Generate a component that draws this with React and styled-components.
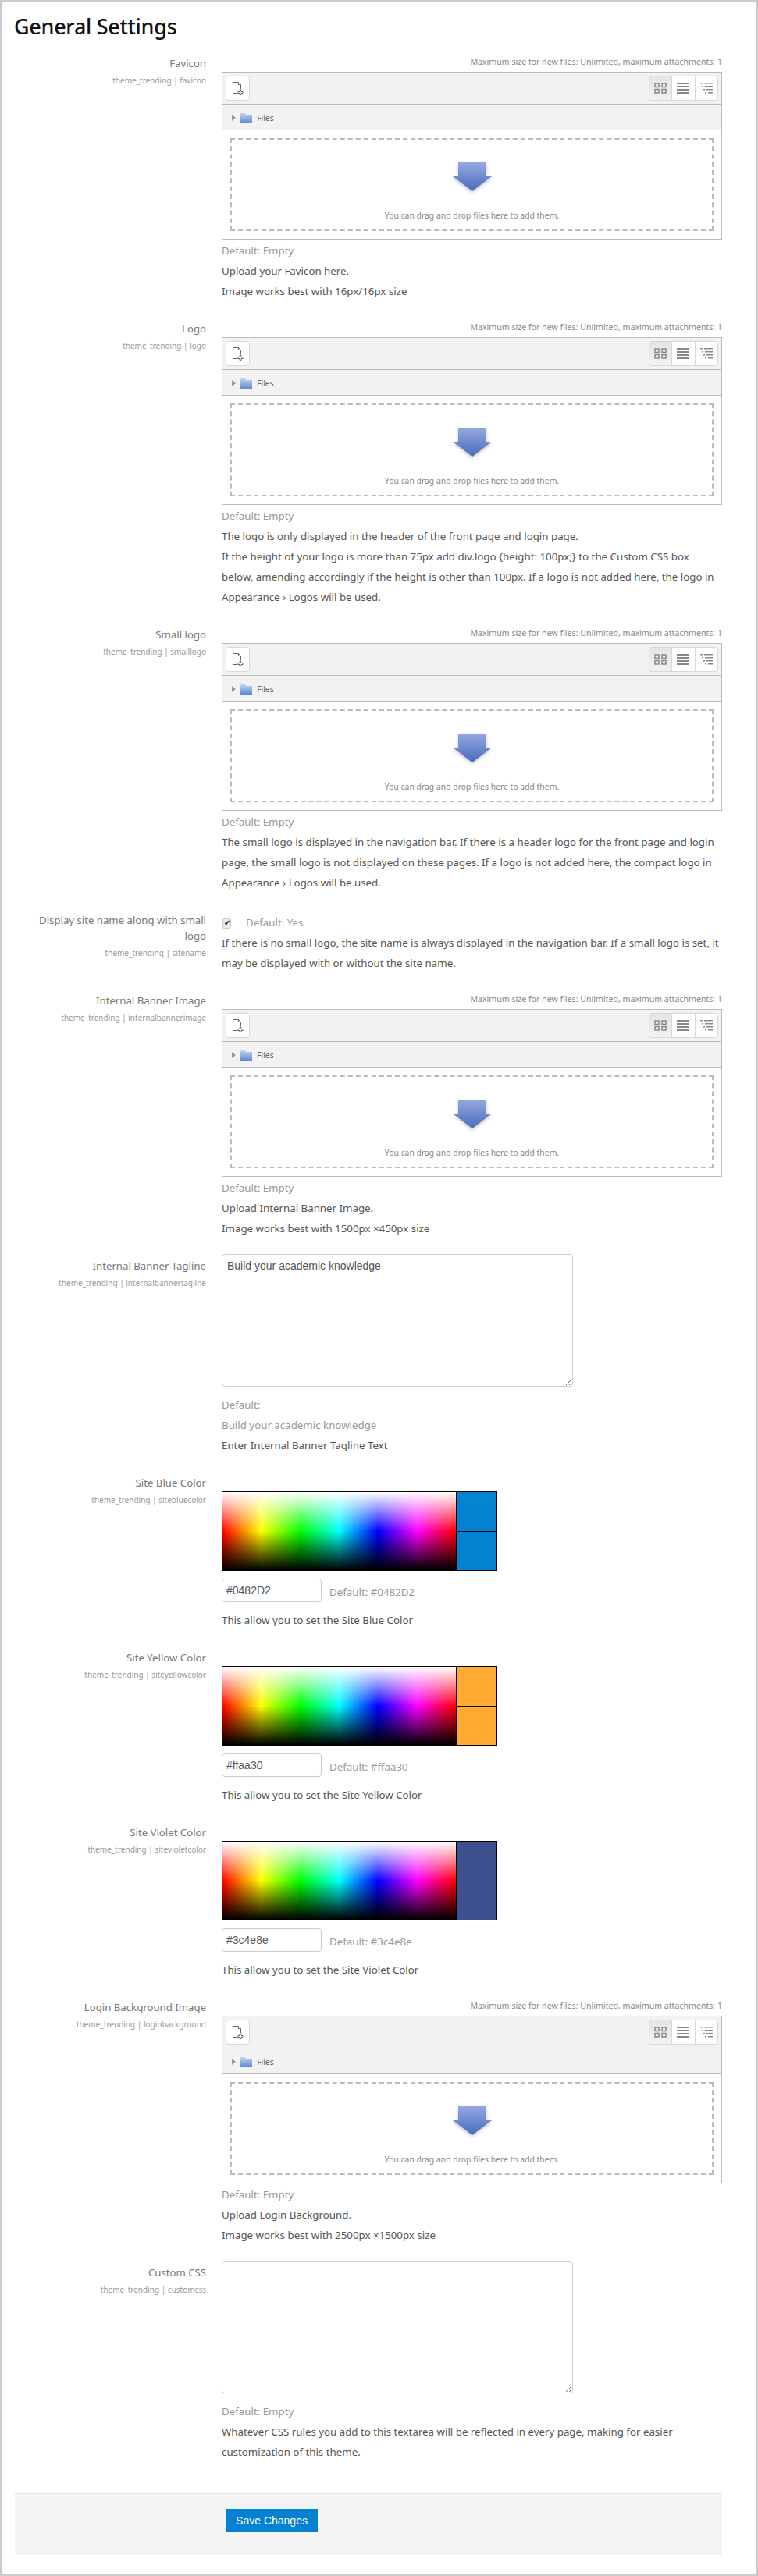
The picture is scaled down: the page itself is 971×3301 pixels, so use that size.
import styled, { createGlobalStyle } from 'styled-components';

const GlobalStyle = createGlobalStyle`
  body {
    margin: 0;
    background: #fff;
    color: #555;
    font-family: 'Noto Sans', 'Open Sans', sans-serif;
    font-size: 13.3px;
    line-height: 26px;
  }
`;

const Page = styled.div`
  box-sizing: border-box;
  width: 971px;
  height: 3301px;
  border: 2px solid #ccc;
  padding: 0 44px 0 17px;
`;

const Heading = styled.h2`
  margin: 0 0 0 -1px;
  height: 64px;
  padding-top: 12px;
  box-sizing: border-box;
  color: #111;
  font-size: 27px;
  font-weight: 500;
  letter-spacing: -0.3px;
  line-height: 40px;
`;

const Row = styled.div`
  display: grid;
  grid-template-columns: 245px 641px;
  column-gap: 20px;
  margin-bottom: 20px;
`;

const LabelCol = styled.div`
  padding: 5px 0 0 15px;
  text-align: right;
`;

const Title = styled.div`
  color: #777;
  font-size: 13.2px;
  line-height: 20px;
`;

const Shortname = styled.div`
  margin-top: 2px;
  color: #999;
  font-size: 10px;
  line-height: 20px;
`;

const Limits = styled.div`
  color: #888;
  font-size: 10.6px;
  line-height: 26px;
  text-align: right;
`;

const Picker = styled.div`
  box-sizing: border-box;
  height: 215px;
  border: 1px solid #bbb;
  margin-bottom: 1px;
`;

const Toolbar = styled.div`
  display: flex;
  justify-content: space-between;
  align-items: flex-start;
  box-sizing: border-box;
  height: 41px;
  padding: 4px 4px 0;
  background: #f2f2f2;
  border-bottom: 1px solid #bbb;
`;

const ToolButton = styled.div`
  display: flex;
  align-items: center;
  justify-content: center;
  box-sizing: border-box;
  width: ${({ $wide }) => ($wide ? '31px' : '30.5px')};
  height: 32px;
  background: ${({ $active }) => ($active ? 'linear-gradient(#e4e4e4, #f2f2f2)' : '#fff')};
  border: 1px solid #d8d8d8;
  border-radius: 4px;
`;

const ViewGroup = styled.div`
  display: flex;
  ${ToolButton} {
    border-radius: 0;
    margin-left: -1px;
  }
  ${ToolButton}:first-child {
    border-radius: 4px 0 0 4px;
  }
  ${ToolButton}:last-child {
    border-radius: 0 4px 4px 0;
  }
`;

const PathBar = styled.div`
  display: flex;
  align-items: center;
  box-sizing: border-box;
  height: 33px;
  padding: 1px 0 0 12px;
  gap: 6px;
  background: #f2f2f2;
  border-bottom: 1px solid #bbb;
  color: #666;
  font-size: 10.5px;
`;

const Caret = styled.span`
  width: 0;
  height: 0;
  border-left: 5px solid #999;
  border-top: 4px solid transparent;
  border-bottom: 4px solid transparent;
`;

const DropArea = styled.div`
  box-sizing: border-box;
  height: 139px;
  padding: 10px;
`;

const DropZone = styled.div`
  display: flex;
  flex-direction: column;
  align-items: center;
  box-sizing: border-box;
  height: 119px;
  padding-top: 29px;
  border: 2px dashed #bbb;
  color: #888;
  font-size: 10.4px;
  line-height: 20px;
`;

const DropText = styled.div`
  margin-top: 20px;
`;

const ArrowSvg = styled.svg`
  display: block;
  filter: drop-shadow(0 2px 2px rgba(0, 0, 0, 0.22));
`;

const Muted = styled.div`
  color: #999;
`;

const Text = styled.div`
  color: #555;
`;

const CheckRow = styled.div`
  display: flex;
  align-items: center;
  gap: 19px;
  margin-top: 5px;
`;

const CheckBox = styled.input`
  appearance: none;
  display: flex;
  align-items: center;
  justify-content: center;
  width: 11px;
  height: 13px;
  margin: 2px 0 0 1px;
  background: #e9e9e9;
  border: 1px solid #ccc;
  border-radius: 2px;

  &::after {
    content: '✔';
    color: #111;
    font-size: 10px;
    line-height: 1;
  }
`;

const Area = styled.textarea`
  display: block;
  box-sizing: border-box;
  width: 450px;
  height: 170px;
  margin: 0 0 10px;
  padding: 4px 6px;
  border: 1px solid #ccc;
  border-radius: 4px;
  color: #555;
  font-family: 'Liberation Sans', Arial, sans-serif;
  font-size: 14px;
  line-height: 20px;
`;

const ColorWrap = styled.div`
  padding-top: 26px;
`;

const ColorBox = styled.div`
  display: grid;
  grid-template-columns: 1fr 52px;
  box-sizing: border-box;
  width: 353px;
  height: 102px;
  border: 1px solid #000;
`;

const Spectrum = styled.div`
  background:
    linear-gradient(#fff 0%, rgba(255, 255, 255, 0) 50%, rgba(0, 0, 0, 0) 50%, #000 100%),
    linear-gradient(90deg, #f00 0%, #ff0 16.6%, #0f0 33.3%, #0ff 50%, #00f 66.6%, #f0f 83.3%, #f00 100%);
`;

const Swatches = styled.div`
  display: grid;
  grid-template-rows: 1fr 1fr;
  border-left: 1px solid #000;
`;

const Swatch = styled.div`
  background: ${({ $color }) => $color};
  & + & {
    border-top: 1px solid #000;
  }
`;

const ColorMeta = styled.div`
  display: flex;
  align-items: center;
  gap: 10px;
  margin: 10px 0;
`;

const ColorInput = styled.input`
  box-sizing: border-box;
  width: 128px;
  height: 30px;
  padding: 0 5px;
  border: 1px solid #ccc;
  border-radius: 4px;
  color: #555;
  font-family: 'Liberation Sans', Arial, sans-serif;
  font-size: 14px;
`;

const ColorDefault = styled(Muted)`
  margin-top: 3px;
`;

const Footer = styled.div`
  box-sizing: border-box;
  height: 79px;
  margin-top: 40px;
  width: 906px;
  padding: 19px 0 0 270px;
  background: #f4f4f4;
  border-top: 1px solid #e6e6e6;
`;

const SaveButton = styled.button`
  width: 118px;
  height: 30px;
  padding: 0;
  background: #0482d2;
  border: 0;
  color: #fff;
  font-family: 'Liberation Sans', Arial, sans-serif;
  font-size: 14px;
`;

const AddFileIcon = () => (
  <svg width="18" height="18" viewBox="0 0 18 18" fill="none" stroke="#666" strokeWidth="1">
    <path d="M2.5 15.5V1.5h7l3 3v6" />
    <path d="M9.5 1.5v3h3" />
    <path d="M2.5 15.5h6" />
    <path d="M11 11.5h2v2h2v2h-2v2h-2v-2H9v-2h2z" fill="#fff" />
  </svg>
);

const GridIcon = () => (
  <svg width="16" height="14" viewBox="0 0 16 14" fill="none" stroke="#888" strokeWidth="1.5">
    <rect x="1" y="1" width="5" height="4.5" />
    <rect x="10" y="1" width="5" height="4.5" />
    <rect x="1" y="8.5" width="5" height="4.5" />
    <rect x="10" y="8.5" width="5" height="4.5" />
  </svg>
);

const ListIcon = () => (
  <svg width="16" height="14" viewBox="0 0 16 14" fill="#888">
    <rect y="0" width="16" height="2" />
    <rect y="4" width="16" height="2" />
    <rect y="8" width="16" height="2" />
    <rect y="12" width="16" height="2" />
  </svg>
);

const TreeIcon = () => (
  <svg width="16" height="14" viewBox="0 0 16 14" fill="#888">
    <rect x="0" y="0" width="3" height="1.5" />
    <rect x="5" y="0" width="11" height="1.5" />
    <rect x="2" y="4" width="2" height="1.5" />
    <rect x="6" y="4" width="10" height="1.5" />
    <rect x="4" y="8" width="2" height="1.5" />
    <rect x="8" y="8" width="8" height="1.5" />
    <rect x="6" y="12" width="2" height="1.5" />
    <rect x="10" y="12" width="6" height="1.5" />
  </svg>
);

const FolderIcon = () => (
  <svg width="15" height="14" viewBox="0 0 15 14">
    <defs>
      <linearGradient id="folderFill" x1="0" y1="0" x2="0" y2="1">
        <stop offset="0" stopColor="#c3d6f2" />
        <stop offset="1" stopColor="#5f86cf" />
      </linearGradient>
    </defs>
    <path d="M0 1h6l1 2h8v11H0z" fill="url(#folderFill)" />
  </svg>
);

const DropArrow = () => (
  <ArrowSvg width="50" height="38" viewBox="0 0 50 38">
    <defs>
      <linearGradient id="arrowFill" x1="0" y1="0" x2="0" y2="1">
        <stop offset="0" stopColor="#94a9de" />
        <stop offset="1" stopColor="#4a6bc2" />
      </linearGradient>
    </defs>
    <path d="M7 0h36v18h7L25 37 0 18h7z" fill="url(#arrowFill)" />
  </ArrowSvg>
);

const FilePicker = () => (
  <>
    <Limits>Maximum size for new files: Unlimited, maximum attachments: 1</Limits>
    <Picker>
      <Toolbar>
        <ToolButton $wide>
          <AddFileIcon />
        </ToolButton>
        <ViewGroup>
          <ToolButton $active>
            <GridIcon />
          </ToolButton>
          <ToolButton>
            <ListIcon />
          </ToolButton>
          <ToolButton>
            <TreeIcon />
          </ToolButton>
        </ViewGroup>
      </Toolbar>
      <PathBar>
        <Caret />
        <FolderIcon />
        Files
      </PathBar>
      <DropArea>
        <DropZone>
          <DropArrow />
          <DropText>You can drag and drop files here to add them.</DropText>
        </DropZone>
      </DropArea>
    </Picker>
  </>
);

const ColorPicker = ({ value }) => (
  <ColorWrap>
    <ColorBox>
      <Spectrum />
      <Swatches>
        <Swatch $color={value} />
        <Swatch $color={value} />
      </Swatches>
    </ColorBox>
    <ColorMeta>
      <ColorInput defaultValue={value} />
      <ColorDefault>Default: {value}</ColorDefault>
    </ColorMeta>
  </ColorWrap>
);

const Setting = ({ title, name, children }) => (
  <Row>
    <LabelCol>
      <Title>{title}</Title>
      <Shortname>theme_trending | {name}</Shortname>
    </LabelCol>
    <div>{children}</div>
  </Row>
);

const FileSetting = ({ title, name, lines }) => (
  <Setting title={title} name={name}>
    <FilePicker />
    <Muted>Default: Empty</Muted>
    {lines.map((line) => (
      <Text key={line}>{line}</Text>
    ))}
  </Setting>
);

const ColorSetting = ({ title, name, value, text }) => (
  <Setting title={title} name={name}>
    <ColorPicker value={value} />
    <Text>{text}</Text>
  </Setting>
);

const App = () => (
  <Page>
    <GlobalStyle />
    <Heading>General Settings</Heading>
    <FileSetting
      title="Favicon"
      name="favicon"
      lines={['Upload your Favicon here.', 'Image works best with 16px/16px size']}
    />
    <FileSetting
      title="Logo"
      name="logo"
      lines={[
        'The logo is only displayed in the header of the front page and login page.',
        'If the height of your logo is more than 75px add div.logo {height: 100px;} to the Custom CSS box below, amending accordingly if the height is other than 100px. If a logo is not added here, the logo in Appearance › Logos will be used.',
      ]}
    />
    <FileSetting
      title="Small logo"
      name="smalllogo"
      lines={[
        'The small logo is displayed in the navigation bar. If there is a header logo for the front page and login page, the small logo is not displayed on these pages. If a logo is not added here, the compact logo in Appearance › Logos will be used.',
      ]}
    />
    <Setting title="Display site name along with small logo" name="sitename">
      <CheckRow>
        <CheckBox type="checkbox" checked readOnly />
        <Muted>Default: Yes</Muted>
      </CheckRow>
      <Text>
        If there is no small logo, the site name is always displayed in the navigation bar. If a small logo is set, it
        may be displayed with or without the site name.
      </Text>
    </Setting>
    <FileSetting
      title="Internal Banner Image"
      name="internalbannerimage"
      lines={['Upload Internal Banner Image.', 'Image works best with 1500px ×450px size']}
    />
    <Setting title="Internal Banner Tagline" name="internalbannertagline">
      <Area defaultValue="Build your academic knowledge" />
      <Muted>Default:</Muted>
      <Muted>Build your academic knowledge</Muted>
      <Text>Enter Internal Banner Tagline Text</Text>
    </Setting>
    <ColorSetting
      title="Site Blue Color"
      name="sitebluecolor"
      value="#0482D2"
      text="This allow you to set the Site Blue Color"
    />
    <ColorSetting
      title="Site Yellow Color"
      name="siteyellowcolor"
      value="#ffaa30"
      text="This allow you to set the Site Yellow Color"
    />
    <ColorSetting
      title="Site Violet Color"
      name="sitevioletcolor"
      value="#3c4e8e"
      text="This allow you to set the Site Violet Color"
    />
    <FileSetting
      title="Login Background Image"
      name="loginbackground"
      lines={['Upload Login Background.', 'Image works best with 2500px ×1500px size']}
    />
    <Setting title="Custom CSS" name="customcss">
      <Area />
      <Muted>Default: Empty</Muted>
      <Text>
        Whatever CSS rules you add to this textarea will be reflected in every page, making for easier customization of
        this theme.
      </Text>
    </Setting>
    <Footer>
      <SaveButton type="button">Save Changes</SaveButton>
    </Footer>
  </Page>
);

export default App;
